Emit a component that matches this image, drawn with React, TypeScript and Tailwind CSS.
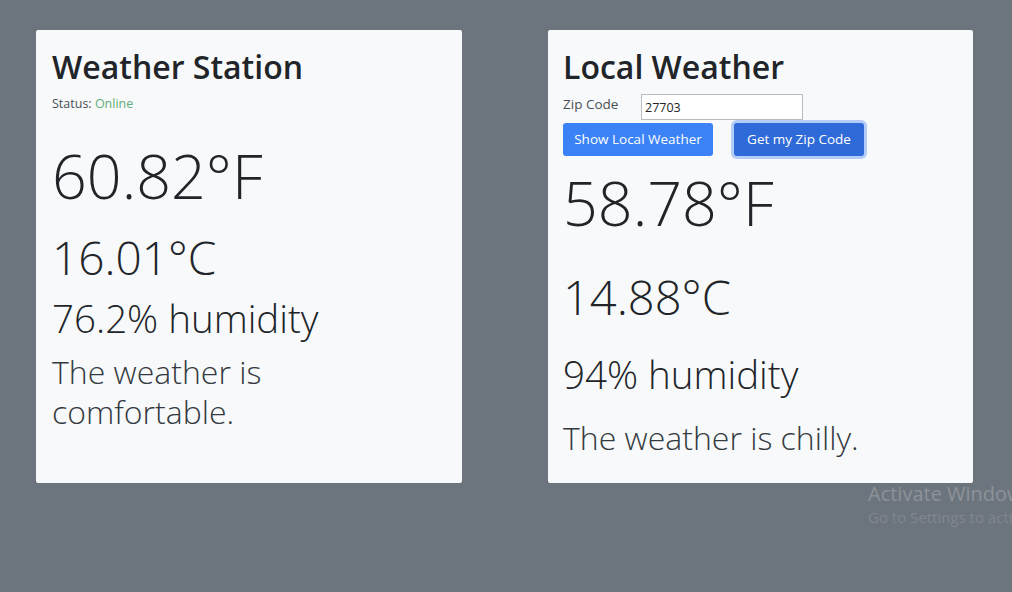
import React from "react";

export default function App() {
  return (
    <div
      className="relative h-[592px] w-[1012px] overflow-hidden bg-[#6c757d] text-[#212529]"
      style={{ fontFamily: '"Open Sans", "Noto Sans", sans-serif' }}
    >
      <div className="flex gap-[86px] pl-[36px] pt-[30px]">
        <div className="h-[453px] w-[426px] rounded-[2px] bg-[#f8f9fa] px-[16px] pt-[17px]">
          <h2 className="text-[32px] font-semibold leading-[40px]">Weather Station</h2>
          <p className="mt-[9px] text-[12.5px] leading-[16px] text-[#495057]">
            Status: <span className="text-[#5fae78]">Online</span>
          </p>
          <div className="mt-[29px] text-[61px] font-light leading-[70px]">60.82°F</div>
          <div className="mt-[18px] text-[46px] font-light leading-[56px]">16.01°C</div>
          <div className="mt-[10px] text-[38.5px] font-light leading-[46px]">76.2% humidity</div>
          <div className="mt-[11px] text-[32px] font-light leading-[40px] text-[#343a40]">
            The weather is
            <br />
            comfortable.
          </div>
        </div>
        <div className="h-[453px] w-[425px] rounded-[2px] bg-[#f8f9fa] px-[15px] pt-[17px]">
          <h2 className="text-[32px] font-semibold leading-[40px]">Local Weather</h2>
          <div className="mt-[7px] flex items-center">
            <label className="w-[78px] self-start pt-[1px] text-[13.5px] leading-[18px] text-[#495057]">Zip Code</label>
            <input
              className="h-[26px] w-[162px] border border-[#b9bdc1] bg-white px-[3px] text-[12.5px] text-[#212529] outline-none"
              defaultValue="27703"
            />
          </div>
          <div className="mt-[3px] flex gap-[21px]">
            <button className="h-[33px] w-[150px] rounded-[3px] bg-[#3b82f6] text-[13.5px] text-white">
              Show Local Weather
            </button>
            <button className="h-[33px] w-[130px] rounded-[3px] bg-[#2f6bd8] text-[13.5px] text-white shadow-[0_0_0_3px_rgba(110,160,245,0.5)]">
              Get my Zip Code
            </button>
          </div>
          <div className="mt-[12px] text-[61px] font-light leading-[70px]">58.78°F</div>
          <div className="mt-[31px] text-[47px] font-light leading-[56px]">14.88°C</div>
          <div className="mt-[26px] text-[38.5px] font-light leading-[46px]">94% humidity</div>
          <div className="mt-[21px] text-[32px] font-light leading-[40px] text-[#343a40]">
            The weather is chilly.
          </div>
        </div>
      </div>
      <div className="absolute left-[868px] top-[481px] whitespace-nowrap text-[#8c9299]">
        <div className="text-[20px] leading-[26px]">Activate Windows</div>
        <div className="text-[15px] leading-[20px] text-[#80868d]">Go to Settings to activate Windows.</div>
      </div>
    </div>
  );
}
